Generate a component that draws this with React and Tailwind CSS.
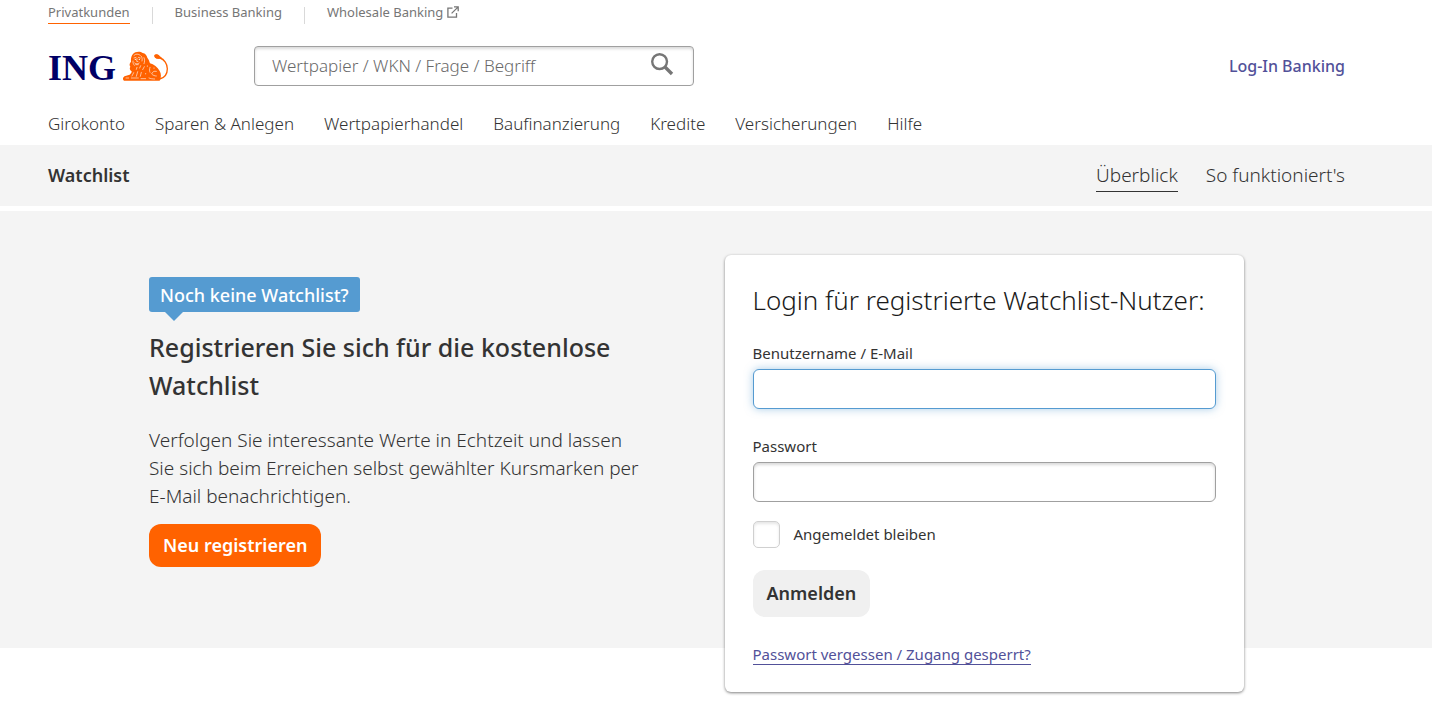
const topLinks = [
  { label: 'Privatkunden', active: true },
  { label: 'Business Banking' },
  { label: 'Wholesale Banking', external: true },
];

const mainLinks = [
  'Girokonto',
  'Sparen & Anlegen',
  'Wertpapierhandel',
  'Baufinanzierung',
  'Kredite',
  'Versicherungen',
  'Hilfe',
];

function ExternalIcon() {
  return (
    <svg viewBox="0 0 12 12" className="h-3 w-3" fill="none" stroke="currentColor" strokeWidth="1.3" aria-hidden="true">
      <path d="M5.5 2.2H.9v8.9h8.6V7" />
      <path d="M7 .9h4.2v4.4M11 1.1 4.6 7.4" />
    </svg>
  );
}

function SearchIcon() {
  return (
    <svg viewBox="0 0 24 24" className="h-6 w-6" fill="none" stroke="currentColor" aria-hidden="true">
      <circle cx="9.6" cy="9.6" r="7.4" strokeWidth="2.4" />
      <path d="m15 15 7 7" strokeWidth="3.4" />
    </svg>
  );
}

function Lion() {
  return (
    <svg viewBox="24 18 138 93" className="h-[31px] w-[46px]" aria-hidden="true">
      {/* tail */}
      <path d="M126 31c-5-2-7 1-5 5 3 4 9 3 14 3 13 4 22 18 22 32 0 15-8 27-23 31" fill="none" stroke="#ff6200" strokeWidth="4" />
      <path d="M118 30c5-4 13-2 16 3l10 8c-6-2-9 0-14 0-7 0-13-4-12-11z" fill="#ff6200" />
      {/* body and mane */}
      <path
        d="M54 27c6-7 21-9 29-3 8 1 13 8 14 14 5 6 6 11 8 17 11 3 23 11 29 23 5 9 5 19 0 29H27c-6-4-3-12 4-14l13-4c4-3 6-6 6-10-6-4-7-9-4-14-4-5-2-11 2-15-1-9 1-17 6-23z"
        fill="#ff6200"
      />
      <g fill="none" stroke="#fff" strokeLinecap="round" strokeWidth="1.8">
        <path d="M57 31c5-5 13-5 19 0M57 39l6-2M70 37l6 2M66 40l-1 9 4 1M59 54c4 4 10 4 14 0M62 59h8" />
        <path d="M79 34c3 5 3 9 2 14M87 38c3 7 2 12 0 18M54 48c-1 5 1 9 4 13M77 62l-3 7M88 65l-5 9M66 67l-2 6" />
        <path d="M56 83l-5 10M68 80l-4 14M79 82l-3 12M49 99h21M33 99h8M78 101h14" />
        <path d="M105 67c-2 6-2 11 0 15M124 79c-7-2-12 2-14 8 4 4 9 6 14 6M102 99c5 2 10 3 17 3" />
      </g>
      <g fill="#fff">
        <circle cx="61" cy="43" r="2" />
        <circle cx="73" cy="43" r="2" />
        <circle cx="97" cy="63" r="1.5" />
        <circle cx="117" cy="69" r="1.5" />
        <circle cx="92" cy="86" r="1.5" />
      </g>
    </svg>
  );
}

function Logo() {
  return (
    <a href="#" aria-label="ING" className="flex w-[206px] items-center gap-[7px]">
      <span className="pt-1 font-['Liberation_Serif',serif] text-[36px] leading-8 font-bold text-[#000066]">ING</span>
      <Lion />
    </a>
  );
}

function TopBar() {
  return (
    <nav className="flex items-center text-[13px] leading-5 text-[#767676]">
      {topLinks.map((link, i) => (
        <div key={link.label} className="flex items-start">
          {i > 0 && <span className="mx-[22px] mt-[7px] h-[17px] w-px bg-[#d9d9d9]" />}
          <a
            href="#"
            className={`flex h-6 items-center gap-1 border-b ${link.active ? 'border-[#ff6200]' : 'border-transparent'}`}
          >
            {link.label}
            {link.external && <ExternalIcon />}
          </a>
        </div>
      ))}
    </nav>
  );
}

function Field({ id, label, type = 'text', focused }) {
  return (
    <div>
      <label htmlFor={id} className="block text-[15px] leading-8">{label}</label>
      <input
        id={id}
        type={type}
        className={`block h-10 w-full rounded-md border bg-white px-4 outline-none ${
          focused
            ? 'border-[#559bd1] shadow-[0_0_8px_rgba(85,155,209,0.5)]'
            : 'border-[#a0a0a0] shadow-[inset_0_2px_3px_rgba(0,0,0,0.15)]'
        }`}
      />
    </div>
  );
}

function LoginCard() {
  return (
    <form className="-mb-11 flex flex-col items-stretch rounded-md bg-white px-7 py-[27px] text-[#333] shadow-[0_1px_3px_rgba(0,0,0,0.5)]">
      <h2 className="text-[26px] leading-9 font-light text-[#1a1a1a]">Login für registrierte Watchlist-Nutzer:</h2>
      <div className="mt-[19px] flex flex-col gap-[21px]">
        <Field id="username" label="Benutzername / E-Mail" focused />
        <Field id="password" label="Passwort" type="password" />
      </div>
      <label className="mt-[19px] flex items-center gap-[14px] text-[15px] leading-[27px]">
        <input
          type="checkbox"
          className="size-[27px] appearance-none rounded-[5px] border border-[#d0d0d0] bg-white shadow-[inset_0_2px_3px_rgba(0,0,0,0.1)]"
        />
        Angemeldet bleiben
      </label>
      <button type="button" className="mt-[22px] h-[47px] self-start rounded-xl bg-[#f0f0f0] px-[14px] text-[18px] font-semibold">
        Anmelden
      </button>
      <a href="#" className="mt-7 self-start border-b border-[#525199] text-[15px] leading-[19px] text-[#525199]">
        Passwort vergessen / Zugang gesperrt?
      </a>
    </form>
  );
}

export default function App() {
  return (
    <div className="min-h-screen bg-white font-['Noto_Sans',sans-serif] text-[#333]">
      <header className="pr-[87px] pl-12">
        <TopBar />
        <div className="mt-[22px] flex items-center">
          <Logo />
          <form className="flex h-10 w-[440px] items-center rounded-sm border border-[#a0a0a0] pr-[19px] pl-[17px] shadow-[inset_0_2px_3px_rgba(0,0,0,0.15)]">
            <input
              type="search"
              aria-label="Suche"
              placeholder="Wertpapier / WKN / Frage / Begriff"
              className="min-w-0 flex-1 text-[17px] font-light outline-none placeholder:text-[#696969]"
            />
            <button type="button" aria-label="Suchen" className="mb-1 text-[#767676]">
              <SearchIcon />
            </button>
          </form>
          <a href="#" className="ml-auto text-[16px] font-medium text-[#525199]">Log-In Banking</a>
        </div>
        <nav className="flex h-[59px] items-center gap-[30px] pt-4 text-[17px] font-light">
          {mainLinks.map((label) => (
            <a key={label} href="#">{label}</a>
          ))}
        </nav>
      </header>

      <div className="flex h-[61px] items-center bg-[#f4f4f4] pr-[87px] pl-12">
        <a href="#" className="text-[18px] font-semibold">Watchlist</a>
        <nav className="ml-auto flex gap-7 text-[19px] leading-8 font-light">
          <a href="#" className="border-b border-[#333]">Überblick</a>
          <a href="#">So funktioniert's</a>
        </nav>
      </div>

      <main className="mt-[5px] grid grid-cols-2 gap-14 bg-[#f4f4f4] pt-11 pr-[188px] pl-[149px]">
        <section className="pt-[22px]">
          <div className="relative inline-block h-[35px] rounded-[3px] bg-[#559bd1] px-[11px] text-[18px] leading-9 font-medium text-white">
            Noch keine Watchlist?
            <span className="absolute top-full left-4 border-x-9 border-t-9 border-x-transparent border-t-[#559bd1]" />
          </div>
          <h1 className="mt-4 text-[25px] leading-[38px] font-medium">
            Registrieren Sie sich für die kostenlose Watchlist
          </h1>
          <p className="mt-[22px] max-w-[500px] text-[19px] leading-7 font-light">
            Verfolgen Sie interessante Werte in Echtzeit und lassen Sie sich beim Erreichen selbst gewählter Kursmarken per E-Mail benachrichtigen.
          </p>
          <button type="button" className="mt-[14px] h-[43px] rounded-xl bg-[#ff6200] px-[14px] text-[18px] font-semibold text-white">
            Neu registrieren
          </button>
        </section>
        <LoginCard />
      </main>
    </div>
  );
}
